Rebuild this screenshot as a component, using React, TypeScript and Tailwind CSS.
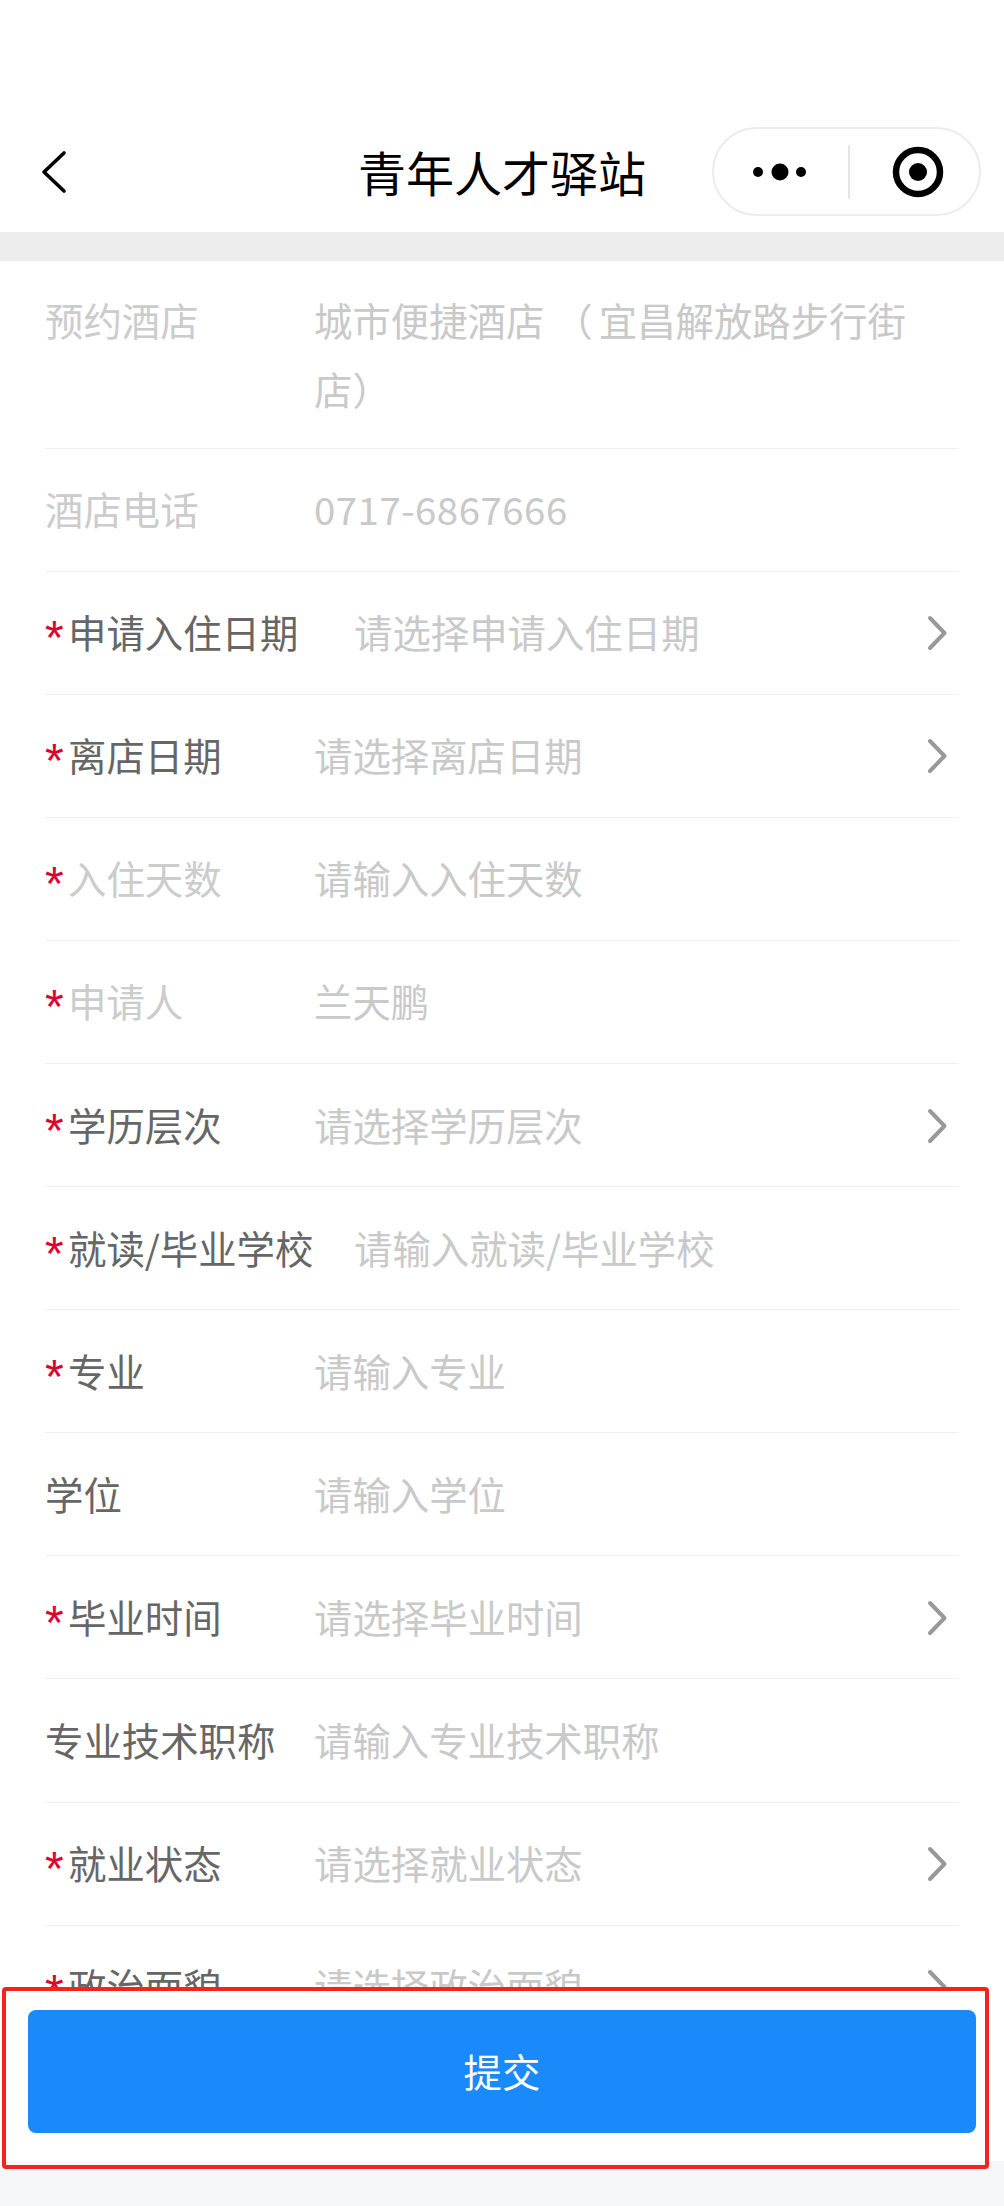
type Row = {
  label: string;
  value: string;
  required?: boolean;
  disabled?: boolean;
  arrow?: boolean;
  phone?: boolean;
  wide?: boolean;
};

const rows: Row[] = [
  { label: "酒店电话", value: "0717-6867666", disabled: true, phone: true },
  { label: "申请入住日期", value: "请选择申请入住日期", required: true, arrow: true, wide: true },
  { label: "离店日期", value: "请选择离店日期", required: true, arrow: true },
  { label: "入住天数", value: "请输入入住天数", required: true, disabled: true },
  { label: "申请人", value: "兰天鹏", required: true, disabled: true },
  { label: "学历层次", value: "请选择学历层次", required: true, arrow: true },
  { label: "就读/毕业学校", value: "请输入就读/毕业学校", required: true, wide: true },
  { label: "专业", value: "请输入专业", required: true },
  { label: "学位", value: "请输入学位" },
  { label: "毕业时间", value: "请选择毕业时间", required: true, arrow: true },
  { label: "专业技术职称", value: "请输入专业技术职称" },
  { label: "就业状态", value: "请选择就业状态", required: true, arrow: true },
  { label: "政治面貌", value: "请选择政治面貌", required: true, arrow: true },
];

function Chevron() {
  return (
    <svg width="24" height="40" viewBox="0 0 24 40" fill="none" className="mt-[3px] mr-[9px] shrink-0">
      <path d="M4 5 L18.5 20 L4 35" stroke="#999999" strokeWidth="4" strokeLinecap="round" strokeLinejoin="round" />
    </svg>
  );
}

function FormRow({ row }: { row: Row }) {
  return (
    <div className="flex h-[123.1px] shrink-0 items-center border-b border-[#f0f0f0] pb-[2px]">
      <div
        className={`flex shrink-0 items-center ${row.wide ? "w-[309px]" : "w-[269px]"} ${
          row.disabled ? "text-[#cccccc]" : "text-[#666666]"
        }`}
      >
        {row.required && (
          <span className="w-[23px] translate-y-[6px] font-['Liberation_Sans',sans-serif] text-[48px] leading-[69px] text-[#d9072f]">*</span>
        )}
        <span>{row.label}</span>
      </div>
      <div className={`min-w-0 flex-1 text-[#c9c9c9] ${row.phone ? "tracking-[0.5px]" : ""}`}>{row.value}</div>
      {row.arrow && <Chevron />}
    </div>
  );
}

export default function App() {
  return (
    <div className="flex h-[2206px] w-[1004px] flex-col overflow-hidden bg-[#f6f7f8] font-['Noto_Sans_CJK_SC','Noto_Sans',sans-serif] text-[38.4px] leading-[69px]">
      <header className="relative flex h-[232px] shrink-0 items-end justify-center bg-white pb-[28px]">
        <svg width="28" height="44" viewBox="0 0 28 44" fill="none" className="absolute left-[40px] top-[150px]">
          <path d="M24 3 L4 22 L24 41" stroke="#000000" strokeWidth="3.6" strokeLinecap="round" strokeLinejoin="round" />
        </svg>
        <h1 className="text-[48px] leading-[66px] font-normal text-black">青年人才驿站</h1>
        <div className="absolute left-[712px] top-[127px] flex h-[89px] w-[269px] items-center rounded-full border-2 border-[#ececec] bg-white">
          <svg width="134" height="54" viewBox="0 0 134 54" className="shrink-0">
            <circle cx="44" cy="27" r="5" fill="#000000" />
            <circle cx="66" cy="27" r="8.5" fill="#000000" />
            <circle cx="87" cy="27" r="5" fill="#000000" />
          </svg>
          <div className="h-[54px] w-[2px] shrink-0 bg-[#e6e6e6]" />
          <svg width="130" height="54" viewBox="0 0 130 54" className="shrink-0">
            <circle cx="68" cy="27" r="22" fill="none" stroke="#000000" strokeWidth="6.5" />
            <circle cx="68" cy="27" r="9" fill="#000000" />
          </svg>
        </div>
      </header>
      <div className="h-[29px] shrink-0 bg-[#ededed]" />
      <main className="flex min-h-0 flex-1 flex-col overflow-hidden bg-white px-[45px]">
        <div className="flex h-[187.5px] shrink-0 items-start border-b border-[#f0f0f0] pt-[24px] text-[#cccccc]">
          <div className="w-[269px] shrink-0">预约酒店</div>
          <div className="min-w-0 flex-1 text-[#c9c9c9]">
            城市便捷酒店<span className="mr-[6px] ml-[10px]">（</span>宜昌解放路步行街店）
          </div>
        </div>
        {rows.map((row) => (
          <FormRow key={row.label} row={row} />
        ))}
      </main>
      <footer className="relative h-[173px] shrink-0 bg-white px-[28px] pt-[22px]">
        <button className="h-[123px] w-full rounded-[8px] bg-[#1a89fa] pb-[3px] text-center text-[38.4px] text-white">提交</button>
      </footer>
      <div className="h-[45px] shrink-0" />
      <div className="pointer-events-none absolute left-[2px] top-[1987px] h-[182px] w-[987px] rounded-[4px] border-4 border-[#f5231c]" />
    </div>
  );
}
